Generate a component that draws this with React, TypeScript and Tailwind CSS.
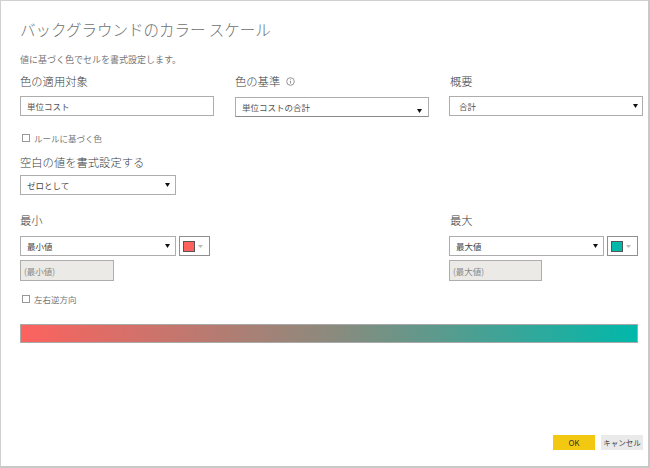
import React from "react";

const font = { fontFamily: '"Noto Sans CJK JP", "Noto Sans", sans-serif' };

function Arrow({ className = "" }: { className?: string }) {
  return (
    <svg width="5" height="4" viewBox="0 0 5 4" className={className}>
      <polygon points="0,0 5,0 2.5,4" fill="#111" />
    </svg>
  );
}

function Select({ text, w, arrowClass = "" }: { text: string; w: string; arrowClass?: string }) {
  return (
    <div className={`relative flex items-center h-[20px] ${w} border border-[#adadad] bg-white pl-[6px] text-[8.5px] leading-[12px] text-[#444]`}>
      <span>{text}</span>
      <Arrow className={`absolute right-[5px] ${arrowClass}`} />
    </div>
  );
}

function Swatch({ color }: { color: string }) {
  return (
    <div className="relative flex items-center h-[20px] w-[31px] border border-[#8f8f8f] bg-white pl-[3px]">
      <div className="w-[12px] h-[11px] border border-[#555]" style={{ backgroundColor: color }} />
      <svg width="5" height="3" viewBox="0 0 5 3" className="absolute right-[6px]">
        <polygon points="0,0 5,0 2.5,3" fill="#bbb" />
      </svg>
    </div>
  );
}

function Check({ label }: { label: string }) {
  return (
    <div className="flex items-center h-[12px] pl-[1px]">
      <div className="w-[8px] h-[8px] border border-[#999] bg-white" />
      <span className="ml-[4px] text-[8.5px] leading-[12px] text-[#777]">{label}</span>
    </div>
  );
}

const label = "text-[11.3px] leading-[14px] text-[#3c3c3c] font-light";

export default function App() {
  return (
    <div
      style={font}
      className="w-[650px] h-[468px] bg-white border-l border-t border-[#d0d0d0] border-r-2 border-b-2 border-r-[#c8c8c8] border-b-[#c8c8c8] pl-[19px] pt-[18px] relative"
    >
      <div className="text-[15.5px] leading-[20px] text-[#707070] font-light">バックグラウンドのカラー スケール</div>
      <div className="mt-[15px] text-[9px] leading-[12px] text-[#777]">値に基づく色でセルを書式設定します。</div>

      <div className="mt-[8px] grid grid-cols-[194px_194px_194px] gap-x-[21px]">
        <div>
          <div className={label}>色の適用対象</div>
          <div className="mt-[8px] flex items-center h-[20px] border border-[#adadad] pl-[6px] text-[8.5px] leading-[12px] text-[#555]">
            単位コスト
          </div>
        </div>
        <div>
          <div className={`flex items-center ${label}`}>
            色の基準
            <svg width="9" height="9" viewBox="0 0 9 9" className="ml-[6px]">
              <circle cx="4.5" cy="4.5" r="3.8" fill="none" stroke="#888" strokeWidth="0.9" />
              <rect x="4.1" y="4" width="0.9" height="2.5" fill="#888" />
              <rect x="4.1" y="2.4" width="0.9" height="0.9" fill="#888" />
            </svg>
          </div>
          <div className="mt-[9px]">
            <div className="relative flex items-center h-[20px] w-[194px] border border-[#adadad] border-b-[#8a8a8a] bg-white pl-[6px] text-[8.5px] leading-[12px] text-[#555]">
              <span>単位コストの合計</span>
              <Arrow className="absolute right-[6px] top-[11px]" />
            </div>
          </div>
        </div>
        <div className="-ml-[1px]">
          <div className={`pl-[1px] ${label}`}>概要</div>
          <div className="mt-[8px]">
            <div className="relative flex items-center h-[20px] w-[194px] border border-[#adadad] bg-white pl-[9px] text-[8.5px] leading-[12px] text-[#555]">
              <span>合計</span>
              <Arrow className="absolute right-[4px] top-[7px]" />
            </div>
          </div>
        </div>
      </div>

      <div className="mt-[15px] pl-[1px]">
        <Check label="ルールに基づく色" />
      </div>

      <div className={`mt-[11px] ${label}`}>空白の値を書式設定する</div>
      <div className="mt-[6px]">
        <Select text="ゼロとして" w="w-[156px] h-[19px]" />
      </div>

      <div className="mt-[18px] grid grid-cols-[194px_194px_194px] gap-x-[21px]">
        <div>
          <div className={label}>最小</div>
          <div className="mt-[9px] flex gap-[3px]">
            <Select text="最小値" w="w-[156px]" />
            <Swatch color="#fd625e" />
          </div>
          <div className="mt-[4px] flex items-center h-[21px] w-[94px] border border-[#adadad] bg-[#ebeae6] pl-[3px] text-[8.5px] leading-[12px] text-[#888]">
            (最小値)
          </div>
        </div>
        <div />
        <div className="-ml-[1px]">
          <div className={`pl-[1px] ${label}`}>最大</div>
          <div className="mt-[9px] flex gap-[3px]">
            <Select text="最大値" w="w-[155px]" />
            <Swatch color="#01b8aa" />
          </div>
          <div className="mt-[4px] flex items-center h-[21px] w-[93px] border border-[#adadad] bg-[#ebeae6] pl-[3px] text-[8.5px] leading-[12px] text-[#888]">
            (最大値)
          </div>
        </div>
      </div>

      <div className="mt-[12px] pl-[1px]">
        <Check label="左右逆方向" />
      </div>

      <div className="mt-[19px] w-[618px] h-[19px] border border-[#a9a9a9] bg-[linear-gradient(to_right,#fd625e,#8c8a7d,#01b8aa)]" />

      <div className="mt-[92px] flex justify-end gap-[6px] pr-[5px]">
        <div className="flex items-center justify-center w-[42px] h-[15px] bg-[#f2c811] text-[8px] leading-[10px] text-[#333]">OK</div>
        <div className="flex items-center justify-center w-[42px] h-[15px] bg-[#eaeaea] text-[7.5px] leading-[10px] text-[#444]">キャンセル</div>
      </div>
    </div>
  );
}
